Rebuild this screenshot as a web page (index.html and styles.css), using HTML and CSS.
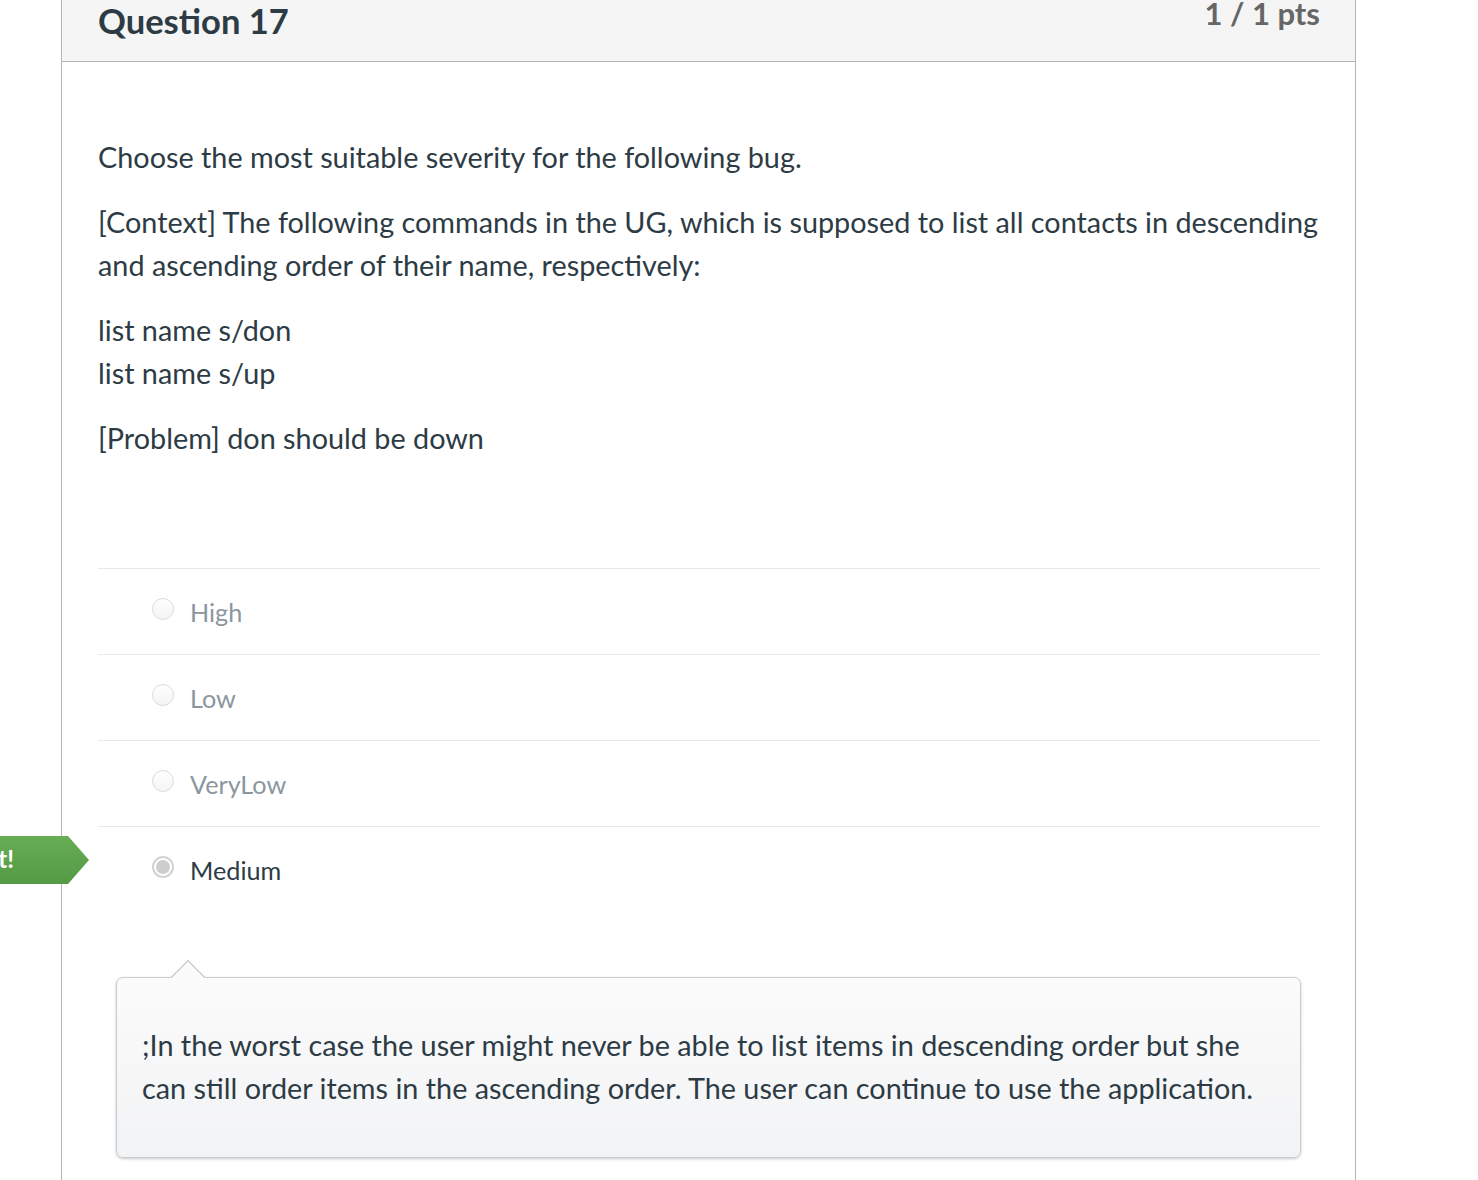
FILE: index.html
```html
<!DOCTYPE html>
<html lang="en">
<head>
<meta charset="utf-8">
<title>Question 17</title>
<link rel="stylesheet" href="styles.css">
</head>
<body>
<div class="page">
  <div class="badge"><span class="badge-text">Correct!</span></div>
  <div class="card">
    <div class="card-header">
      <h2 class="title">Question 17</h2>
      <div class="pts">1 / 1 pts</div>
    </div>
    <div class="card-body">
      <div class="question-text">
        <p>Choose the most suitable severity for the following bug.</p>
        <p>[Context] The following commands in the UG, which is supposed to list all contacts in descending and ascending order of their name, respectively:</p>
        <p>list name s/don<br>list name s/up</p>
        <p>[Problem] don should be down</p>
      </div>
      <div class="answers">
        <div class="answer"><span class="radio"></span><span class="label">High</span></div>
        <div class="answer"><span class="radio"></span><span class="label">Low</span></div>
        <div class="answer"><span class="radio"></span><span class="label">VeryLow</span></div>
        <div class="answer selected"><span class="radio checked"></span><span class="label">Medium</span></div>
      </div>
      <div class="comment">
        <p>;In the worst case the user might never be able to list items in descending order but she can still order items in the ascending order. The user can continue to use the application.</p>
      </div>
    </div>
  </div>
</div>
</body>
</html>
```

FILE: styles.css
```css
html, body {
  margin: 0;
  padding: 0;
  background: #ffffff;
}
body {
  font-family: Lato, "Noto Sans", sans-serif;
  color: #2d3b45;
  overflow: hidden;
  height: 1180px;
}
.page {
  position: relative;
  padding-left: 61px;
  width: 1295px;
}
.card {
  border-left: 1px solid #b4b4b4;
  border-right: 1px solid #b4b4b4;
  width: 1293px;
  min-height: 1180px;
}
.card-header {
  display: flex;
  justify-content: space-between;
  align-items: flex-start;
  background: #f5f5f5;
  height: 61px;
  border-bottom: 1px solid #b4b4b4;
  padding: 0 35px 0 36px;
}
.title {
  margin: 0;
  font-size: 34.56px;
  line-height: 42px;
  font-weight: 700;
  color: #2d3b45;
}
.pts {
  margin-top: -6px;
  font-size: 31px;
  line-height: 38px;
  font-weight: 700;
  color: #666666;
}
.card-body {
  padding: 74px 35px 0 36px;
}
.question-text p {
  margin: 0 0 21.6px 0;
  font-size: 28.8px;
  line-height: 43.2px;
}
.question-text p:last-child {
  margin-bottom: 0;
}
.answers {
  margin-top: 108px;
}
.answer {
  display: flex;
  align-items: center;
  height: 85px;
  border-top: 1px solid #e9e9e9;
  padding-left: 54px;
}
.radio {
  position: relative;
  width: 20px;
  height: 20px;
  border: 1px solid #dcdcdc;
  border-radius: 50%;
  background: linear-gradient(#ffffff, #f4f4f4);
  margin-top: -6px;
  margin-right: 16px;
}
.radio.checked {
  border: 2px solid #d2d2d2;
  width: 18px;
  height: 18px;
  background: #ffffff;
}
.radio.checked::after {
  content: "";
  position: absolute;
  left: 2px;
  top: 2px;
  width: 14px;
  height: 14px;
  border-radius: 50%;
  background: #cdcdcd;
}
.label {
  font-size: 25.2px;
  color: #8b969e;
}
.answer.selected .label {
  color: #2d3b45;
}
.comment {
  position: relative;
  margin: 65px 19px 0 18px;
  background: linear-gradient(#fbfbfc, #f2f3f4);
  border: 1px solid #c7cdd1;
  border-radius: 7px;
  box-shadow: 0 1px 3px rgba(0, 0, 0, 0.22);
  padding: 46px 25px 47px 25px;
}
.comment::before {
  content: "";
  position: absolute;
  left: 59px;
  top: -13px;
  width: 23px;
  height: 23px;
  background: #fbfbfc;
  border-top: 1px solid #b8c0c6;
  border-left: 1px solid #b8c0c6;
  transform: rotate(45deg);
}
.comment p {
  position: relative;
  margin: 0;
  font-size: 28.8px;
  line-height: 43.2px;
  color: #2d3b45;
}
.badge {
  position: absolute;
  left: 0;
  top: 836px;
  width: 89px;
  height: 48px;
  background: linear-gradient(#66ad55, #559a45);
  clip-path: polygon(0 0, 68px 0, 100% 50%, 68px 100%, 0 100%);
  display: flex;
  justify-content: flex-end;
  align-items: center;
  overflow: hidden;
  z-index: 2;
}
.badge-text {
  flex: none;
  color: #ffffff;
  font-weight: 700;
  font-size: 24px;
  margin-right: 75px;
  margin-top: -4px;
  white-space: nowrap;
}
```
